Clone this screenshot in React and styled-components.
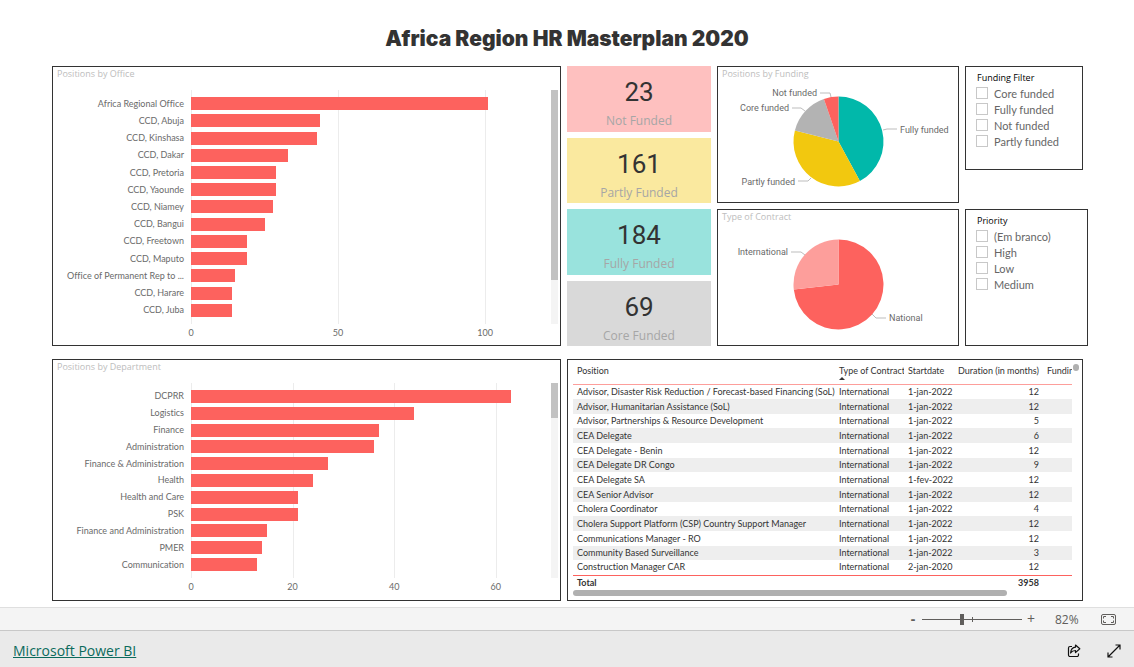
import React from 'react'
import styled, { createGlobalStyle } from 'styled-components'

const color = {
  red: '#fd625e',
  pink: '#fd9e9b',
  teal: '#01b8aa',
  yellow: '#f2c80f',
  grey: '#b3b3b3',
  dark: '#333333',
  label: '#6a6a6a',
  title: '#bdbdbd',
  scroll: '#c2c2c2',
}

const font = {
  text: '"Open Sans", "Noto Sans", sans-serif',
  small: 'Lato, "Open Sans", sans-serif',
  din: 'Roboto, "Liberation Sans", sans-serif',
}

const offices = [
  ['Africa Regional Office', 101],
  ['CCD, Abuja', 44],
  ['CCD, Kinshasa', 43],
  ['CCD, Dakar', 33],
  ['CCD, Pretoria', 29],
  ['CCD, Yaounde', 29],
  ['CCD, Niamey', 28],
  ['CCD, Bangui', 25],
  ['CCD, Freetown', 19],
  ['CCD, Maputo', 19],
  ['Office of Permanent Rep to ...', 15],
  ['CCD, Harare', 14],
  ['CCD, Juba', 14],
]

const departments = [
  ['DCPRR', 63],
  ['Logistics', 44],
  ['Finance', 37],
  ['Administration', 36],
  ['Finance & Administration', 27],
  ['Health', 24],
  ['Health and Care', 21],
  ['PSK', 21],
  ['Finance and Administration', 15],
  ['PMER', 14],
  ['Communication', 13],
]

const cards = [
  { value: 23, label: 'Not Funded', bg: '#fec0bf' },
  { value: 161, label: 'Partly Funded', bg: '#fae99f' },
  { value: 184, label: 'Fully Funded', bg: '#99e3dd' },
  { value: 69, label: 'Core Funded', bg: '#d9d9d9' },
]

const funding = [
  { label: 'Fully funded', value: 184, fill: color.teal, line: '165,49 169,48 179,48', x: 182, y: 52 },
  { label: 'Partly funded', value: 161, fill: color.yellow, line: '80,100 90,100 93,97', x: 77, y: 104, end: true },
  { label: 'Core funded', value: 69, fill: color.grey, line: '74,27 83,27 87,30', x: 71, y: 30, end: true },
  { label: 'Not funded', value: 23, fill: color.red, line: '102,12 112,12 113,16', x: 99, y: 15, end: true },
]

const contracts = [
  { label: 'National', value: 732, fill: color.red, line: '154,90 158,94 168,94', x: 171, y: 97 },
  { label: 'International', value: 268, fill: color.pink, line: '73,28 83,28 87,31', x: 70, y: 31, end: true },
]

const positions = [
  ['Advisor, Disaster Risk Reduction / Forecast-based Financing (SoL)', '1-jan-2022', 12],
  ['Advisor, Humanitarian Assistance (SoL)', '1-jan-2022', 12],
  ['Advisor, Partnerships & Resource Development', '1-jan-2022', 5],
  ['CEA Delegate', '1-jan-2022', 6],
  ['CEA Delegate - Benin', '1-jan-2022', 12],
  ['CEA Delegate DR Congo', '1-jan-2022', 9],
  ['CEA Delegate SA', '1-fev-2022', 12],
  ['CEA Senior Advisor', '1-jan-2022', 12],
  ['Cholera Coordinator', '1-jan-2022', 4],
  ['Cholera Support Platform (CSP) Country Support Manager', '1-jan-2022', 12],
  ['Communications Manager - RO', '1-jan-2022', 12],
  ['Community Based Surveillance', '1-jan-2022', 3],
  ['Construction Manager CAR', '2-jan-2020', 12],
]

const range = (step, max) => {
  const out = []
  for (let n = 0; n <= max; n += step) out.push(n)
  return out
}

function BarChart({ title, data, step, max, thumb, height }) {
  const ticks = range(step, max)
  const cell = { width: (step / max) * 100 + '%' }
  return (
    <Panel>
      <PanelTitle>{title}</PanelTitle>
      <Chart $height={height}>
        <Labels>
          {data.map(([name]) => <li key={name}>{name}</li>)}
        </Labels>
        <Gridlines>
          {ticks.map(t => <i key={t} style={cell} />)}
        </Gridlines>
        <Bars>
          {data.map(([name, value]) => (
            <Bar key={name} style={{ width: (value / max) * 100 + '%' }} />
          ))}
        </Bars>
        <ScrollTrack>
          <ScrollThumb style={{ height: thumb + '%' }} />
        </ScrollTrack>
        <Axis>
          {ticks.map(t => <Tick key={t} style={cell}><span>{t}</span></Tick>)}
        </Axis>
      </Chart>
    </Panel>
  )
}

function PieChart({ title, data }) {
  const cx = 120.5
  const cy = 60.5
  const r = 45
  const total = data.reduce((sum, d) => sum + d.value, 0)
  const point = v => {
    const a = (v / total) * Math.PI * 2
    return (cx + r * Math.sin(a)) + ' ' + (cy - r * Math.cos(a))
  }
  let from = 0
  return (
    <Panel>
      <PanelTitle>{title}</PanelTitle>
      <Pie viewBox="0 0 240 119" role="img" aria-label={title}>
        {data.map(d => {
          const start = from
          from += d.value
          const large = d.value > total / 2 ? 1 : 0
          return (
            <g key={d.label}>
              <path fill={d.fill} d={`M${cx} ${cy}L${point(start)}A${r} ${r} 0 ${large} 1 ${point(from)}Z`} />
              <polyline points={d.line} fill="none" stroke="#bdbdbd" />
              <text x={d.x} y={d.y} textAnchor={d.end ? 'end' : 'start'}>{d.label}</text>
            </g>
          )
        })}
      </Pie>
    </Panel>
  )
}

function Filter({ title, options, inset }) {
  return (
    <FilterPanel $inset={inset}>
      <legend>{title}</legend>
      {options.map(o => (
        <Option key={o}>
          <input type="checkbox" />
          {o}
        </Option>
      ))}
    </FilterPanel>
  )
}

function PositionsTable() {
  return (
    <TablePanel>
      <TableBox>
        <Table>
          <colgroup>
            <col />
            <Col $w={69} />
            <Col $w={50} />
            <Col $w={89} />
            <Col $w={29} />
          </colgroup>
          <thead>
            <tr>
              <th>Position</th>
              <th aria-sort="ascending">Type of Contract<SortMark /></th>
              <th>Startdate</th>
              <th>Duration (in months)</th>
              <th>Funding</th>
            </tr>
          </thead>
          <tbody>
            {positions.map(([name, date, months]) => (
              <tr key={name}>
                <td>{name}</td>
                <td>International</td>
                <td>{date}</td>
                <NumberCell>{months}</NumberCell>
                <td />
              </tr>
            ))}
          </tbody>
          <tfoot>
            <tr>
              <td>Total</td>
              <td />
              <td />
              <NumberCell>3958</NumberCell>
              <td />
            </tr>
          </tfoot>
        </Table>
        <HorizontalThumb />
      </TableBox>
      <VerticalThumb />
    </TablePanel>
  )
}

export default function App() {
  return (
    <>
      <GlobalStyle />
      <Title>Africa Region HR Masterplan 2020</Title>
      <Dashboard>
        <BarChart title="Positions by Office" data={offices} step={50} max={120} thumb={81} height={234} />
        <Stack>
          {cards.map(c => (
            <Card key={c.label} $bg={c.bg}>
              <strong>{c.value}</strong>
              <span>{c.label}</span>
            </Card>
          ))}
        </Stack>
        <Stack>
          <PieChart title="Positions by Funding" data={funding} />
          <PieChart title="Type of Contract" data={contracts} />
        </Stack>
        <Stack>
          <Filter title="Funding Filter" inset options={['Core funded', 'Fully funded', 'Not funded', 'Partly funded']} />
          <Filter title="Priority" options={['(Em branco)', 'High', 'Low', 'Medium']} />
        </Stack>
        <BarChart title="Positions by Department" data={departments} step={20} max={69.5} thumb={18} height={195} />
        <PositionsTable />
      </Dashboard>
      <ZoomBar>
        <ZoomButton aria-label="Zoom out" $bold>-</ZoomButton>
        <ZoomSlider type="range" min="0" max="100" defaultValue="40" aria-label="Zoom" />
        <ZoomButton aria-label="Zoom in">+</ZoomButton>
        <ZoomValue>82%</ZoomValue>
        <IconButton aria-label="Fit to page">
          <svg width="15" height="11" viewBox="0 0 15 11" fill="none" stroke="#605e5c">
            <rect x="0.5" y="0.5" width="14" height="10" rx="1.5" />
            <path d="M5 2.5H2.5V4.5M10 2.5H12.5V4.5M5 8.5H2.5V6.5M10 8.5H12.5V6.5" />
          </svg>
        </IconButton>
      </ZoomBar>
      <Footer>
        <a href="#powerbi">Microsoft Power BI</a>
        <IconButton aria-label="Share">
          <svg width="14" height="14" viewBox="0 0 14 14" fill="none" stroke="#111" strokeWidth="1.2" strokeLinejoin="round">
            <path d="M5 2.5H3A1.5 1.5 0 0 0 1.5 4V11A1.5 1.5 0 0 0 3 12.5H10A1.5 1.5 0 0 0 11.5 11V9.5" />
            <path d="M8.5 1L12.8 4.8L8.5 8.6V6.5C6.2 6.5 4.8 7.2 3.6 9C3.9 5.6 5.6 3.5 8.5 3.2Z" />
          </svg>
        </IconButton>
        <IconButton aria-label="Full screen">
          <svg width="14" height="14" viewBox="0 0 14 14" fill="none" stroke="#111" strokeWidth="1.2">
            <path d="M1 13L13 1M8.5 1H13V5.5M1 8.5V13H5.5" />
          </svg>
        </IconButton>
      </Footer>
    </>
  )
}

const GlobalStyle = createGlobalStyle`
  * {
    box-sizing: border-box;
  }
  body {
    margin: 0;
    background: #fff;
    font-family: ${font.text};
    font-variant-ligatures: none;
  }
  #root {
    min-height: 100vh;
    display: flex;
    flex-direction: column;
  }
`

const Title = styled.h1`
  margin: 0;
  height: 66px;
  padding-top: 25px;
  text-align: center;
  font-family: Inter, "Liberation Sans", sans-serif;
  font-weight: 900;
  font-size: 21px;
  line-height: 28px;
  color: ${color.dark};
`

const Dashboard = styled.main`
  flex: 1;
  display: grid;
  grid-template-columns: 509fr 144fr 242fr 123fr;
  grid-template-rows: 280px 242px;
  gap: 13px 6px;
  padding: 0 46px 6px 52px;
`

const Stack = styled.div`
  min-width: 0;
  display: grid;
  grid-auto-rows: 1fr;
  gap: 6px;
`

const Panel = styled.section`
  min-width: 0;
  border: 1px solid ${color.dark};
`

const PanelTitle = styled.h2`
  margin: 0;
  padding-left: 4px;
  height: 14px;
  font-weight: 400;
  font-size: 9px;
  line-height: 14px;
  color: ${color.title};
`

const Chart = styled.div`
  display: grid;
  grid-template-columns: 131px 1fr 7px;
  grid-template-rows: ${props => props.$height}px 14px;
  column-gap: 7px;
  padding: 9px 2px 0 0;
  font-family: ${font.small};
  font-size: 9px;
  color: ${color.label};
`

const Labels = styled.ul`
  margin: 0;
  padding: 5px 0;
  list-style: none;
  display: grid;
  grid-auto-rows: 1fr;
  align-items: center;
  text-align: right;
  white-space: nowrap;
  line-height: 12px;
`

const Gridlines = styled.div`
  grid-area: 1 / 2;
  display: flex;
  overflow: hidden;
  i {
    flex: none;
    border-left: 1px solid #ececec;
  }
`

const Bars = styled.div`
  grid-area: 1 / 2;
  padding: 5px 0;
  display: grid;
  grid-auto-rows: 1fr;
  align-items: center;
`

const Bar = styled.div`
  height: 13px;
  background: ${color.red};
`

const ScrollTrack = styled.div`
  background: #f4f4f4;
`

const ScrollThumb = styled.div`
  background: ${color.scroll};
`

const Axis = styled.div`
  grid-area: 2 / 2;
  display: flex;
  line-height: 18px;
`

const Tick = styled.div`
  flex: none;
  display: flex;
  span {
    width: 0;
    display: flex;
    justify-content: center;
  }
`

const Card = styled.div`
  display: flex;
  flex-direction: column;
  align-items: center;
  background: ${props => props.$bg};
  strong {
    margin-top: 10px;
    font-family: ${font.din};
    font-weight: 400;
    font-size: 26px;
    line-height: 32px;
    color: ${color.dark};
  }
  span {
    margin-top: 5px;
    font-size: 12px;
    line-height: 16px;
    color: #a6a6a6;
  }
`

const Pie = styled.svg`
  display: block;
  width: 100%;
  text {
    font-family: ${font.din};
    font-size: 9px;
    fill: ${color.label};
  }
`

const FilterPanel = styled.fieldset`
  min-width: 0;
  margin: 0 ${props => (props.$inset ? '5px 33px 0' : '0 0 0')};
  border: 1px solid ${color.dark};
  padding: 4px 10px;
  legend {
    float: left;
    width: 100%;
    padding: 0 1px;
    font-size: 9px;
    line-height: 14px;
    color: #000;
  }
`

const Option = styled.label`
  clear: both;
  display: flex;
  align-items: center;
  height: 16px;
  gap: 6px;
  font-family: ${font.small};
  font-size: 11px;
  color: #666;
  input {
    appearance: none;
    margin: 0;
    width: 12px;
    height: 12px;
    border: 1px solid #c8c8c8;
    background: #fff;
  }
`

const TablePanel = styled(Panel)`
  grid-column: 2 / 5;
  margin-right: 5px;
  display: flex;
  padding: 3px 3px 0 5px;
`

const TableBox = styled.div`
  flex: 1;
  min-width: 0;
`

const Table = styled.table`
  width: 100%;
  table-layout: fixed;
  border-collapse: collapse;
  font-family: ${font.small};
  font-size: 9px;
  line-height: 12px;
  color: ${color.dark};
  white-space: nowrap;
  th, td {
    padding: 0 0 0 4px;
    overflow: hidden;
    text-align: left;
    font-weight: 400;
  }
  th {
    height: 21px;
    padding-top: 2px;
    vertical-align: top;
    border-bottom: 1px solid ${color.pink};
  }
  tbody td {
    height: 15px;
  }
  tbody tr:nth-child(3n) td {
    height: 14px;
  }
  tbody tr:nth-child(even) {
    background: #eee;
  }
  tfoot td {
    height: 15px;
    border-top: 1px solid ${color.red};
    font-weight: 700;
  }
`

const Col = styled.col`
  width: ${props => props.$w}px;
`

const NumberCell = styled.td`
  && {
    padding-right: 4px;
    text-align: right;
  }
`

const SortMark = styled.i`
  display: block;
  width: 0;
  border: 3px solid transparent;
  border-top: 0;
  border-bottom-color: ${color.dark};
`

const HorizontalThumb = styled.div`
  width: 87%;
  height: 6px;
  border-radius: 3px;
  background: #b0b0b0;
`

const VerticalThumb = styled.div`
  margin: 1px 0 0 1px;
  width: 6px;
  height: 7px;
  border-radius: 3px;
  background: #b0b0b0;
`

const ZoomBar = styled.div`
  height: 23px;
  display: flex;
  align-items: center;
  justify-content: flex-end;
  padding-right: 18px;
  border-top: 1px solid #dfdfdf;
  background: #f4f4f4;
  color: #605e5c;
`

const ZoomButton = styled.button`
  border: 0;
  padding: 0;
  width: 18px;
  background: none;
  font-family: ${font.text};
  font-weight: ${props => (props.$bold ? 700 : 400)};
  font-size: 14px;
  line-height: 20px;
  color: inherit;
`

const ZoomSlider = styled.input`
  appearance: none;
  margin: 0;
  width: 100px;
  height: 12px;
  background:
    linear-gradient(#605e5c, #605e5c) center / 100% 1px no-repeat,
    linear-gradient(#605e5c, #605e5c) center / 1px 5px no-repeat;
  &::-webkit-slider-thumb {
    appearance: none;
    width: 4px;
    height: 11px;
    background: #605e5c;
  }
`

const ZoomValue = styled.span`
  width: 61px;
  padding-left: 15px;
  font-size: 12px;
`

const IconButton = styled.button`
  border: 0;
  padding: 0;
  background: none;
  display: flex;
`

const Footer = styled.footer`
  height: 37px;
  display: flex;
  align-items: center;
  gap: 26px;
  padding: 3px 13px 0;
  border-top: 1px solid #c8c8c8;
  background: #eaeaea;
  a {
    margin-right: auto;
    font-size: 14px;
    line-height: 20px;
    color: #0b6a5c;
  }
`
